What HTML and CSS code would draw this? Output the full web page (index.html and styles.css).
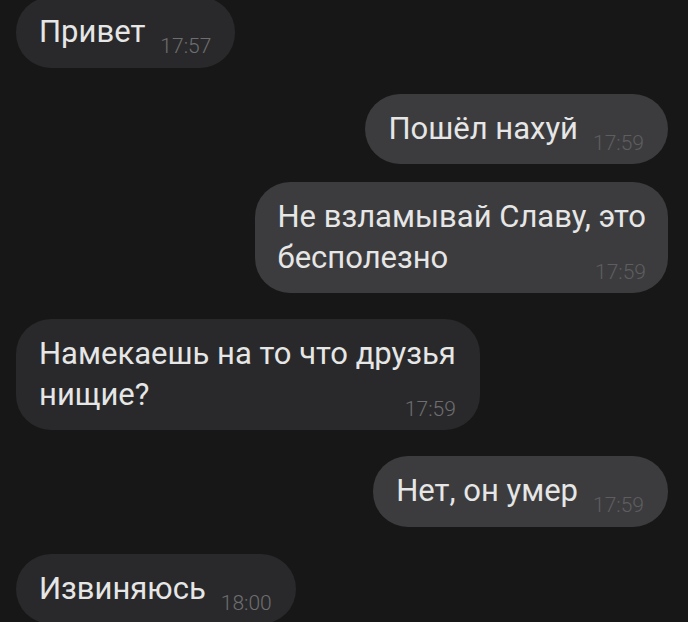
FILE: index.html
```html
<!DOCTYPE html>
<html lang="ru">
<head>
<meta charset="utf-8">
<title>Чат</title>
<link rel="stylesheet" href="styles.css">
</head>
<body>
<div class="chat">
  <div class="msg in first">Привет<span class="time">17:57</span></div>
  <div class="msg out">Пошёл нахуй<span class="time">17:59</span></div>
  <div class="msg out same">Не взламывай Славу, это<br>бесполезно<span class="time">17:59</span></div>
  <div class="msg in">Намекаешь на то что друзья<br>нищие?<span class="time">17:59</span></div>
  <div class="msg out">Нет, он умер<span class="time">17:59</span></div>
  <div class="msg in last">Извиняюсь<span class="time">18:00</span></div>
</div>
</body>
</html>
```
FILE: styles.css
```css
html, body {
  margin: 0;
  padding: 0;
  background: #171717;
  height: 100%;
  overflow: hidden;
}
.chat {
  display: flex;
  flex-direction: column;
  align-items: flex-start;
  padding: 0 20px 0 16px;
  margin-top: -3px;
  font-family: Roboto, "Noto Sans", sans-serif;
}
.msg {
  display: flow-root;
  max-width: 500px;
  padding: 15px 24px 15px 23px;
  border-radius: 35px;
  font-size: 31px;
  line-height: 40.5px;
  color: #e6e6e6;
  margin-top: 26px;
}
.msg.first { margin-top: 0; }
.msg.same { margin-top: 18px; }
.msg.last { margin-top: 27px; }
.msg.in {
  background: #29292b;
  align-self: flex-start;
}
.msg.out {
  background: #3c3c3e;
  align-self: flex-end;
}
.msg.same .time { margin-left: 0; }
.time {
  float: right;
  position: relative;
  top: 14px;
  margin-left: 15px;
  font-size: 21px;
  line-height: 40px;
  font-weight: 300;
  color: #6e6e70;
}
.out .time { color: #5e5e60; }
.msg.same { padding-left: 22px; padding-right: 22px; }
```
